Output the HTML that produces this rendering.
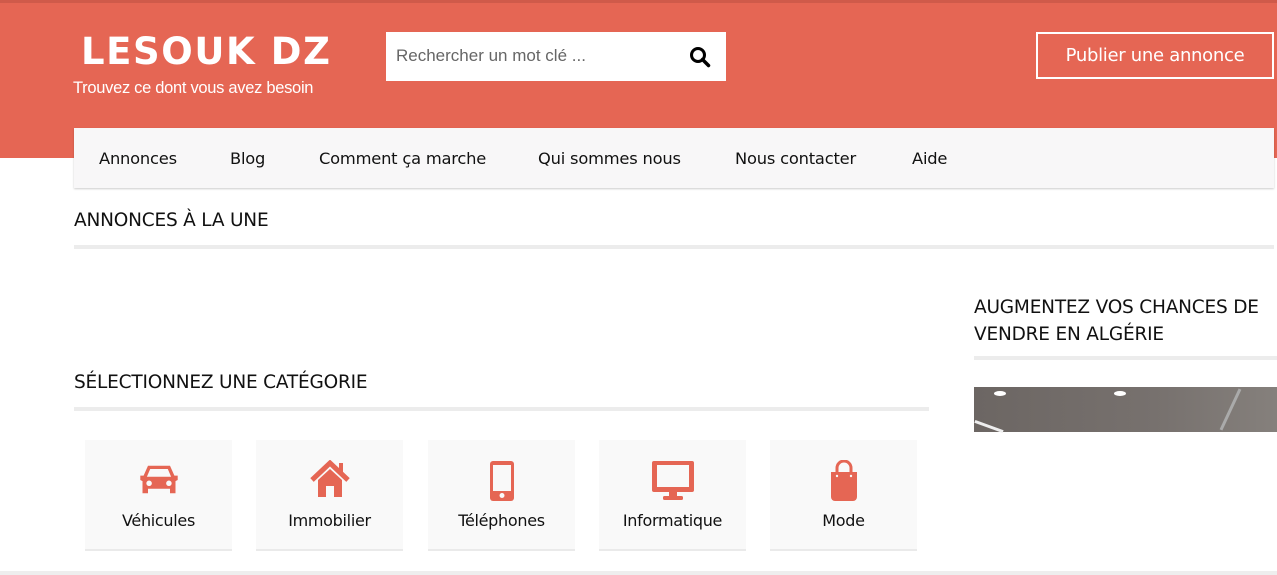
<!DOCTYPE html>
<html><head><meta charset="utf-8"><style>
*{margin:0;padding:0;box-sizing:border-box}
body{width:1277px;height:575px;overflow:hidden;background:#fff;font-family:"DejaVu Sans","Liberation Sans",sans-serif;position:relative}
.hdr{position:absolute;left:0;top:0;width:1277px;height:158px;background:#e56654;border-top:3px solid #cf5a4a}
.logo{position:absolute;left:81px;top:30px;color:#fff;font:bold 37px "DejaVu Sans","Liberation Sans",sans-serif;letter-spacing:1.6px}
.tag{position:absolute;left:73px;top:79px;color:#fff;font-size:16.5px;font-family:"Liberation Sans",sans-serif;letter-spacing:-0.3px}
.search{position:absolute;left:386px;top:32px;width:340px;height:49px;background:#fff}
.search span{position:absolute;left:10px;top:14px;font:17px "Liberation Sans",sans-serif;color:#666}
.pub{position:absolute;left:1036px;top:32px;width:238px;height:47px;border:2px solid #fff;color:#fff;font:18px "DejaVu Sans",sans-serif;text-align:center;line-height:43px;letter-spacing:-0.3px}
.nav{position:absolute;left:74px;top:128px;width:1200px;height:60px;background:#f8f7f8;box-shadow:0 1px 2px rgba(0,0,0,.2)}
.nav span{position:absolute;top:21px;font-size:16.3px;color:#111;letter-spacing:-0.2px}
h2{position:absolute;font-weight:normal;font-size:18.5px;color:#111;letter-spacing:-0.2px}
.line{position:absolute;height:4px;background:#ececec}
.card{position:absolute;top:440px;width:147px;height:111px;background:#f9f9f9;border-bottom:2px solid #eaeaea;text-align:center}
.card svg{position:absolute;left:50%;top:20px;transform:translateX(-50%)}
.card span{position:absolute;left:0;right:0;top:71px;font-size:16px;color:#111;letter-spacing:-0.3px}
</style></head><body>
<div class="hdr"></div>
<div class="logo">LESOUK DZ</div>
<div class="tag">Trouvez ce dont vous avez besoin</div>
<div class="search"><span>Rechercher un mot clé ...</span>
<svg style="position:absolute;left:303px;top:14px" width="22" height="22" viewBox="0 0 22 22"><circle cx="9" cy="9" r="6.5" fill="none" stroke="#000" stroke-width="3"/><line x1="13.5" y1="13.5" x2="19.5" y2="19.5" stroke="#000" stroke-width="3.5" stroke-linecap="round"/></svg></div>
<div class="pub">Publier une annonce</div>
<div class="nav">
<span style="left:25px">Annonces</span><span style="left:156px">Blog</span><span style="left:245px">Comment ça marche</span><span style="left:464px">Qui sommes nous</span><span style="left:661px">Nous contacter</span><span style="left:838px">Aide</span>
</div>
<h2 style="left:74px;top:210px">ANNONCES À LA UNE</h2>
<div class="line" style="left:74px;top:245px;width:1200px"></div>
<h2 style="left:74px;top:372px">SÉLECTIONNEZ UNE CATÉGORIE</h2>
<div class="line" style="left:74px;top:407px;width:855px"></div>
<h2 style="left:974px;top:294px;line-height:27px">AUGMENTEZ VOS CHANCES DE<br>VENDRE EN ALGÉRIE</h2>
<div class="line" style="left:974px;top:356px;width:303px"></div>
<div style="position:absolute;left:974px;top:387px;width:303px;height:45px;background:linear-gradient(90deg,#6c6663,#77716e 60%,#85807c)">
<div style="position:absolute;left:20px;top:4px;width:12px;height:5px;border-radius:50%;background:#fff"></div>
<div style="position:absolute;left:140px;top:4px;width:12px;height:5px;border-radius:50%;background:#fff"></div>
<div style="position:absolute;left:0;top:38px;width:30px;height:3px;background:#eee;transform:rotate(20deg)"></div>
<div style="position:absolute;left:255px;top:0;width:3px;height:45px;background:#aaa;transform:rotate(25deg)"></div>
</div>
<div class="card" style="left:85px"><svg width="44" height="40" viewBox="0 0 40 36"><path d="M10 5h20l4 9h3v4l-2 1v11h-5v-4H10v4H5V19l-2-1v-4h3z" fill="#e56654"/><path d="M12 8h16l3 7H9z" fill="#f9f9f9"/><circle cx="11" cy="21" r="2.5" fill="#f9f9f9"/><circle cx="29" cy="21" r="2.5" fill="#f9f9f9"/></svg><span>Véhicules</span></div>
<div class="card" style="left:256px"><svg width="48" height="40" viewBox="0 0 48 40"><path d="M6 20L24 3l18 17" fill="none" stroke="#e56654" stroke-width="5"/><path d="M33 3h4v10h-4z" fill="#e56654"/><path d="M12 20L24 9l12 11v17H28v-11h-8v11h-8z" fill="#e56654"/></svg><span>Immobilier</span></div>
<div class="card" style="left:428px"><svg width="30" height="42" viewBox="0 0 30 42"><rect x="3" y="1" width="24" height="40" rx="3" fill="#e56654"/><rect x="6" y="5" width="18" height="26" fill="#f9f9f9"/><circle cx="15" cy="35.5" r="2.5" fill="#f9f9f9"/></svg><span>Téléphones</span></div>
<div class="card" style="left:599px"><svg width="48" height="42" viewBox="0 0 48 42"><rect x="3" y="1" width="42" height="31" rx="2" fill="#e56654"/><rect x="8" y="5" width="32" height="22" fill="#f9f9f9"/><rect x="20" y="32" width="8" height="5" fill="#e56654"/><rect x="14" y="36" width="20" height="4" rx="1.5" fill="#e56654"/></svg><span>Informatique</span></div>
<div class="card" style="left:770px"><svg width="40" height="42" viewBox="0 0 40 42"><path d="M13 12V8a7 7 0 0 1 14 0v4" fill="none" stroke="#e56654" stroke-width="3"/><path d="M7 12h26v25a4 4 0 0 1-4 4H11a4 4 0 0 1-4-4z" fill="#e56654"/><circle cx="13" cy="16" r="1.2" fill="#f9f9f9"/><circle cx="27" cy="16" r="1.2" fill="#f9f9f9"/></svg><span>Mode</span></div>
<div style="position:absolute;left:0;top:571px;width:1277px;height:4px;background:#eee"></div>
</body></html>
